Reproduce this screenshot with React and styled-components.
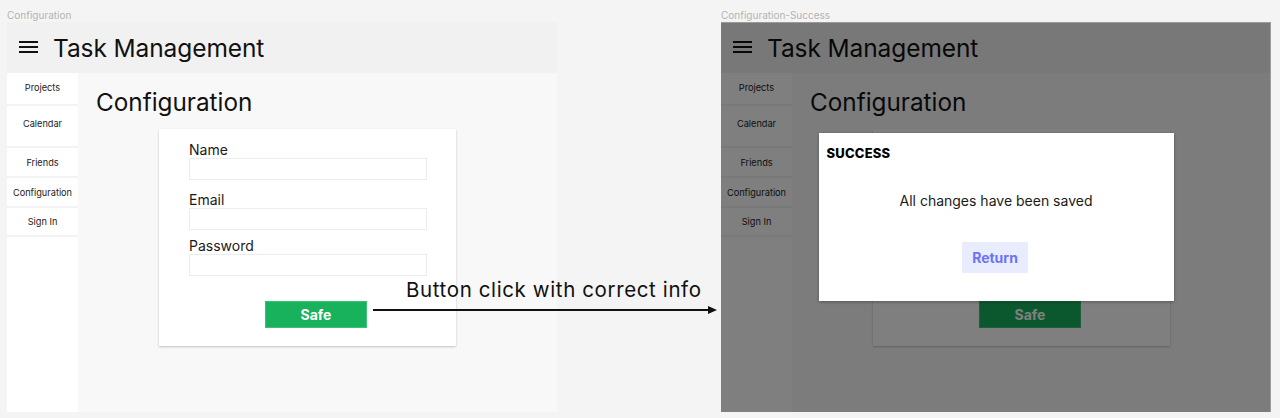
import React from "react";
import styled, { createGlobalStyle } from "styled-components";

const Global = createGlobalStyle`
  html, body { margin: 0; padding: 0; background: #f4f4f4; }
  body { font-family: Inter, "Noto Sans", "Liberation Sans", sans-serif; color: #1a1a1a; }
  * { box-sizing: border-box; }
`;

const Canvas = styled.div`
  position: relative;
  width: 1280px;
  height: 418px;
  background: #f4f4f4;
  display: flex;
  gap: 164px;
  padding: 8px 0 0 7px;
`;

const FrameColumn = styled.div`
  display: flex;
  flex-direction: column;
  width: 550px;
`;

const FrameLabel = styled.div`
  font-size: 10px;
  line-height: 14px;
  color: #b3b3b3;
  height: 14px;
`;

const Frame = styled.div`
  position: relative;
  width: 550px;
  height: 390px;
  display: flex;
  flex-direction: column;
  overflow: hidden;
`;

const Header = styled.header`
  height: 51px;
  background: #f1f1f1;
  display: flex;
  align-items: center;
  padding-left: 12px;
  gap: 15px;
  flex: none;
`;

const Burger = styled.div`
  width: 19px;
  display: flex;
  flex-direction: column;
  gap: 3px;
  margin-top: -1px;
  span {
    display: block;
    height: 2px;
    background: #111;
  }
`;

const AppTitle = styled.h1`
  margin: 0;
  font-size: 24.5px;
  font-weight: 400;
  color: #111;
  letter-spacing: -0.1px;
`;

const Body = styled.div`
  flex: 1;
  display: flex;
`;

const Sidebar = styled.nav`
  width: 71px;
  background: #f3f3f3;
  display: flex;
  flex-direction: column;
  gap: 2px;
`;

const NavItem = styled.div`
  height: ${(p) => p.$h}px;
  padding-bottom: ${(p) => p.$lift || 0}px;
  background: #fff;
  display: flex;
  align-items: center;
  justify-content: center;
  font-size: 9.2px;
  color: #222;
  flex: none;
`;

const NavFill = styled.div`
  flex: 1;
  background: #fff;
`;

const Main = styled.main`
  flex: 1;
  background: #f8f8f8;
  padding: 14px 0 0 18px;
`;

const PageTitle = styled.h2`
  margin: 0;
  font-size: 24.3px;
  line-height: 30px;
  font-weight: 400;
  color: #111;
`;

const Card = styled.div`
  margin: 12px 0 0 63px;
  width: 297px;
  height: 217px;
  background: #fff;
  box-shadow: 0 1px 2px rgba(0, 0, 0, 0.22);
  padding: 12px 0 0 30px;
  display: flex;
  flex-direction: column;
`;

const Field = styled.label`
  display: flex;
  flex-direction: column;
  margin-top: ${(p) => p.$top || 0}px;
`;

const FieldLabel = styled.span`
  font-size: 14px;
  line-height: 17px;
  color: #1a1a1a;
`;

const Input = styled.div`
  width: 238px;
  height: 22px;
  border: 1px solid #ececec;
  background: #fff;
`;

const SaveButton = styled.button`
  margin: 25px 0 0 76px;
  width: 102px;
  height: 27px;
  border: 1px solid #3cc076;
  background: #18b15c;
  color: #fff;
  font-family: Inter, "Noto Sans", sans-serif;
  font-weight: 700;
  font-size: 14px;
  padding: 0;
`;

const Overlay = styled.div`
  position: absolute;
  inset: 0;
  background: rgba(0, 0, 0, 0.5);
  display: flex;
  align-items: center;
  justify-content: center;
  box-shadow: inset -1px 1px 0 rgba(255, 255, 255, 0.25);
`;

const Modal = styled.div`
  width: 355px;
  height: 168px;
  background: #fff;
  box-shadow: 0 1px 3px rgba(0, 0, 0, 0.3);
  padding: 12px 8px 0 8px;
  display: flex;
  flex-direction: column;
`;

const ModalTitle = styled.div`
  font-size: 13px;
  line-height: 16px;
  font-weight: 800;
  color: #000;
  letter-spacing: 0.2px;
`;

const ModalText = styled.div`
  margin-top: 31px;
  text-align: center;
  font-size: 14px;
  line-height: 17px;
  color: #1a1a1a;
`;

const ReturnButton = styled.button`
  align-self: center;
  margin: 33px 0 0 -2px;
  width: 66px;
  height: 31px;
  border: none;
  background: #e9ebff;
  color: #6b73f5;
  font-family: Inter, "Noto Sans", sans-serif;
  font-weight: 700;
  font-size: 14px;
  padding: 0;
`;

const Annotation = styled.div`
  position: absolute;
  left: 373px;
  top: 278px;
  width: 345px;
  display: flex;
  flex-direction: column;
`;

const AnnotationText = styled.div`
  padding-left: 33px;
  font-size: 20.5px;
  line-height: 24px;
  letter-spacing: 0.62px;
  color: #111;
  white-space: nowrap;
`;

const ArrowSvg = styled.svg`
  display: block;
  margin-top: 3px;
`;

const navItems = [
  ["Projects", 31, 3],
  ["Calendar", 40, 6],
  ["Friends", 28, 0],
  ["Configuration", 28, 0],
  ["Sign In", 27, 0],
];

function Screen() {
  return (
    <>
      <Header>
        <Burger>
          <span />
          <span />
          <span />
        </Burger>
        <AppTitle>Task Management</AppTitle>
      </Header>
      <Body>
        <Sidebar>
          {navItems.map(([label, h, lift]) => (
            <NavItem key={label} $h={h} $lift={lift}>
              {label}
            </NavItem>
          ))}
          <NavFill />
        </Sidebar>
        <Main>
          <PageTitle>Configuration</PageTitle>
          <Card>
            <Field>
              <FieldLabel>Name</FieldLabel>
              <Input />
            </Field>
            <Field $top={11}>
              <FieldLabel>Email</FieldLabel>
              <Input />
            </Field>
            <Field $top={7}>
              <FieldLabel>Password</FieldLabel>
              <Input />
            </Field>
            <SaveButton>Safe</SaveButton>
          </Card>
        </Main>
      </Body>
    </>
  );
}

export default function App() {
  return (
    <>
      <Global />
      <Canvas>
        <FrameColumn>
          <FrameLabel>Configuration</FrameLabel>
          <Frame>
            <Screen />
          </Frame>
        </FrameColumn>
        <FrameColumn>
          <FrameLabel>Configuration-Success</FrameLabel>
          <Frame>
            <Screen />
            <Overlay>
              <Modal>
                <ModalTitle>SUCCESS</ModalTitle>
                <ModalText>All changes have been saved</ModalText>
                <ReturnButton>Return</ReturnButton>
              </Modal>
            </Overlay>
          </Frame>
        </FrameColumn>
        <Annotation>
          <AnnotationText>Button click with correct info</AnnotationText>
          <ArrowSvg width="345" height="10" viewBox="0 0 345 10">
            <line x1="0" y1="5" x2="336" y2="5" stroke="#111" strokeWidth="2" />
            <polygon points="335,1 344,5 335,9" fill="#111" />
          </ArrowSvg>
        </Annotation>
      </Canvas>
    </>
  );
}
